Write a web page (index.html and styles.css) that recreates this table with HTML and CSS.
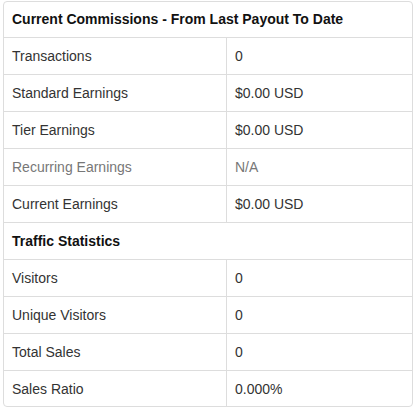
FILE: index.html
```html
<!DOCTYPE html>
<html>
<head>
<meta charset="utf-8">
<link rel="stylesheet" href="styles.css">
</head>
<body>
<div class="panel">
  <table class="stats">
    <tr><th colspan="2" class="first">Current Commissions - From Last Payout To Date</th></tr>
    <tr><td class="label">Transactions</td><td>0</td></tr>
    <tr><td class="label">Standard Earnings</td><td>$0.00 USD</td></tr>
    <tr><td class="label">Tier Earnings</td><td>$0.00 USD</td></tr>
    <tr class="muted"><td class="label">Recurring Earnings</td><td>N/A</td></tr>
    <tr><td class="label">Current Earnings</td><td>$0.00 USD</td></tr>
    <tr><th colspan="2">Traffic Statistics</th></tr>
    <tr><td class="label">Visitors</td><td>0</td></tr>
    <tr><td class="label">Unique Visitors</td><td>0</td></tr>
    <tr><td class="label">Total Sales</td><td>0</td></tr>
    <tr class="last"><td class="label">Sales Ratio</td><td>0.000%</td></tr>
  </table>
</div>
</body>
</html>
```

FILE: styles.css
```css
html, body {
  margin: 0;
  padding: 0;
  background: #fff;
}
body {
  padding: 1px 0 0 3px;
  font-family: "Liberation Sans", Arial, sans-serif;
  font-size: 14px;
  line-height: 20px;
  color: #333;
}
.panel {
  width: 408px;
  border: 1px solid #ddd;
  border-radius: 4px;
  overflow: hidden;
}
.stats {
  width: 100%;
  border-collapse: collapse;
  border-spacing: 0;
}
.stats th,
.stats td {
  padding: 8px;
  text-align: left;
  vertical-align: top;
  border-top: 1px solid #ddd;
  height: 20px;
}
.stats th.first {
  border-top: 0;
  padding-top: 7px;
}
.stats tr.last td {
  padding-bottom: 7px;
}
.stats th {
  font-weight: bold;
  color: #111;
}
.stats td.label {
  width: 206px;
  border-right: 1px solid #ddd;
}
.stats tr.muted td {
  color: #777;
}
```
